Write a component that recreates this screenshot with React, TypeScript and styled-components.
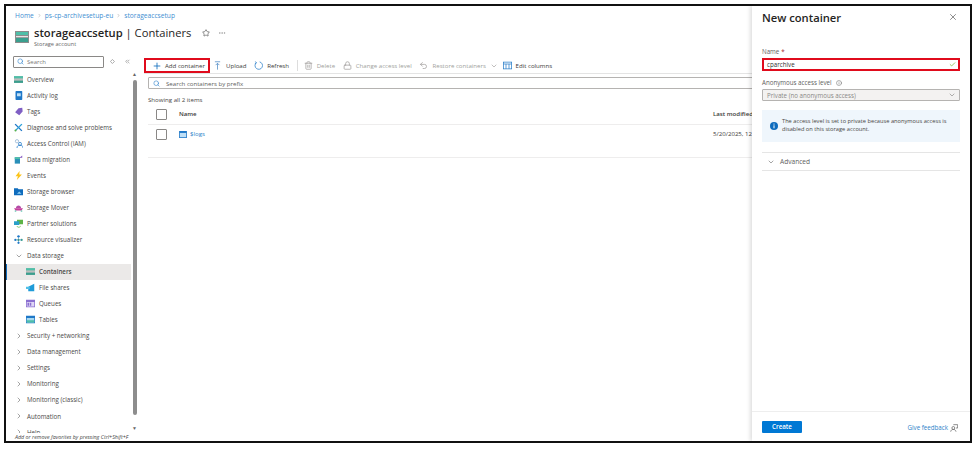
import React from 'react'
import styled, { createGlobalStyle } from 'styled-components'
import { ChevronDown, ChevronRight, Check, X, Plus, Lock, Undo2, Search as SearchGlyph, Star, Trash2, Info, ChevronsLeft, Ellipsis } from 'lucide-react'

const GlobalStyle = createGlobalStyle`
  html, body {
    margin: 0;
    padding: 0;
    background: #fff;
    font-family: "Open Sans", "Liberation Sans", sans-serif;
    color: #323130;
  }
`

const Frame = styled.div`
  position: relative;
  box-sizing: border-box;
  width: 968px;
  height: 439px;
  margin: 4px 0 0 4px;
  border: 2px solid #111;
  overflow: hidden;
  display: flex;
  flex-direction: column;
  background: #fff;
`

const Header = styled.header`
  height: 46px;
  padding: 4px 0 0 9px;
  box-sizing: border-box;
`

const Crumbs = styled.div`
  display: flex;
  align-items: center;
  gap: 3px;
  height: 10px;
  font-size: 6.65px;
  color: #3f8fd2;
`

const TitleRow = styled.div`
  display: flex;
  align-items: center;
  margin-top: 5px;
`

const TitleText = styled.div`
  margin-left: 5px;
`

const Title = styled.h1`
  margin: 0;
  font-size: 11.2px;
  line-height: 15px;
  font-weight: 400;
  color: #252423;
  display: flex;
  align-items: center;
  white-space: nowrap;
  b { font-weight: 600; }
`

const TitleTools = styled.div`
  display: flex;
  align-items: center;
  gap: 8px;
  margin-left: 11px;
  color: #555;
`

const Subtitle = styled.div`
  font-size: 5.6px;
  line-height: 8px;
  color: #666;
`

const Body = styled.div`
  flex: 1;
  min-height: 0;
  display: flex;
`

const Sidebar = styled.aside`
  width: 125px;
  flex: none;
  display: flex;
  flex-direction: column;
`

const SideSearchRow = styled.div`
  display: flex;
  align-items: center;
  height: 13px;
  margin: 3px 0 0 7px;
  color: #777;
`

const SideSearch = styled.div`
  box-sizing: border-box;
  width: 94px;
  height: 12px;
  border: 1px solid #8a8886;
  border-radius: 1px;
  display: flex;
  align-items: center;
  gap: 3px;
  padding-left: 3px;
  font-size: 6px;
  color: #7a7876;
`

const Nav = styled.nav`
  flex: 1;
  min-height: 0;
  overflow: hidden;
  margin-top: 3px;
`

const NavRow = styled.div<{ $level?: number; $active?: boolean }>`
  height: 16.05px;
  display: flex;
  align-items: center;
  gap: 4px;
  box-sizing: border-box;
  padding-left: ${p => (p.$level === 1 ? 19 : 7)}px;
  font-size: 6.2px;
  white-space: nowrap;
  color: #4a4948;
  background: ${p => (p.$active ? '#ebe9e8' : 'transparent')};
  border-left: 1px solid ${p => (p.$active ? '#0f6cbd' : 'transparent')};
  font-weight: ${p => (p.$active ? 600 : 400)};
`

const IconSlot = styled.span`
  width: 9px;
  height: 9px;
  flex: none;
  display: flex;
  align-items: center;
  justify-content: center;
`

const Note = styled.div`
  height: 8px;
  padding-left: 9px;
  font-size: 5.35px;
  line-height: 8px;
  font-style: italic;
  white-space: nowrap;
  color: #444;
`

const ScrollTrack = styled.div`
  width: 7px;
  flex: none;
  display: flex;
  flex-direction: column;
  align-items: center;
  padding: 20px 0 10px;
  box-sizing: border-box;
  color: #666;
  font-size: 5px;
  line-height: 5px;
`

const ScrollThumb = styled.div`
  flex: 1;
  width: 4px;
  margin: 3px 0 11px;
  background: #8d8d8d;
  border-radius: 2px;
`

const Main = styled.main`
  flex: 1;
  min-width: 0;
  padding: 6px 0 0 7px;
`

const Toolbar = styled.div`
  display: flex;
  align-items: center;
  height: 15px;
  border-bottom: 1px solid #e4e4e4;
  margin-left: -1px;
`

const ToolButton = styled.div<{ $disabled?: boolean }>`
  display: flex;
  align-items: center;
  gap: 4px;
  height: 15px;
  box-sizing: border-box;
  padding: 0 4.7px 0 3px;
  font-size: 6.1px;
  white-space: nowrap;
  color: ${p => (p.$disabled ? '#a19f9d' : '#3b3a39')};
`

const AddButton = styled(ToolButton)`
  gap: 3px;
  width: 66px;
  padding: 0 0 0 6px;
  border: 2px solid #e00b1c;
`

const ToolDivider = styled.div`
  width: 1px;
  height: 11px;
  background: #ddd;
  margin: 0 3px;
`

const FilterBox = styled.div`
  box-sizing: border-box;
  height: 12px;
  margin: 3px 0 0 3px;
  border: 1px solid #b5b3b1;
  border-radius: 1px;
  display: flex;
  align-items: center;
  gap: 6px;
  padding-left: 4px;
  font-size: 6.1px;
  color: #605e5c;
`

const Count = styled.div`
  margin: 6px 0 0 3px;
  font-size: 6.1px;
  line-height: 9px;
  color: #484644;
`

const TableRow = styled.div<{ $height: number; $head?: boolean }>`
  display: grid;
  grid-template-columns: 31px 534px 1fr;
  align-items: ${p => (p.$head ? 'center' : 'start')};
  height: ${p => p.$height}px;
  padding-top: ${p => (p.$head ? 0 : 4)}px;
  margin-left: 3px;
  border-bottom: 1px solid #eeeded;
  box-sizing: border-box;
  font-size: 6.1px;
  line-height: 10px;
  white-space: nowrap;
  color: #3b3a39;
  font-weight: ${p => (p.$head ? 600 : 400)};
`

const Checkbox = styled.span`
  display: block;
  width: 11px;
  height: 11px;
  margin-left: 8px;
  box-sizing: border-box;
  border: 1px solid #8a8886;
  border-radius: 1px;
`

const FileLink = styled.span`
  display: flex;
  align-items: center;
  gap: 3px;
  color: #2b7fc9;
`

const Panel = styled.section`
  position: absolute;
  top: 0;
  right: 0;
  bottom: 0;
  width: 218px;
  background: #fff;
  box-shadow: -2px 0 4px rgba(0, 0, 0, 0.13);
  display: flex;
  flex-direction: column;
`

const PanelBody = styled.div`
  flex: 1;
  padding: 0 10px;
`

const PanelHead = styled.div`
  display: flex;
  align-items: center;
  justify-content: space-between;
  height: 22px;
  padding-right: 2px;
  color: #777;
`

const PanelTitle = styled.h2`
  margin: 0;
  font-size: 11.2px;
  font-weight: 600;
  color: #252423;
`

const FieldLabel = styled.label<{ $top: number }>`
  display: flex;
  align-items: center;
  gap: 4px;
  margin-top: ${p => p.$top}px;
  font-size: 6.2px;
  line-height: 9px;
  color: #605e5c;
  em { color: #a4262c; font-style: normal; margin-left: -2px; }
`

const NameInput = styled.div`
  box-sizing: border-box;
  height: 13px;
  margin-top: 2px;
  border: 2px solid #e00b1c;
  display: flex;
  align-items: center;
  justify-content: space-between;
  padding: 0 2px 0 3px;
  font-size: 6.2px;
  color: #323130;
`

const SelectBox = styled.div`
  box-sizing: border-box;
  height: 12px;
  margin-top: 2px;
  background: #f3f2f1;
  border: 1px solid #b5b3b1;
  border-radius: 1px;
  display: flex;
  align-items: center;
  justify-content: space-between;
  padding: 0 3px 0 4px;
  font-size: 6.2px;
  color: #8a8886;
`

const InfoBox = styled.div`
  box-sizing: border-box;
  height: 32px;
  margin-top: 9px;
  background: #eff6fc;
  display: flex;
  align-items: center;
  gap: 4px;
  padding: 0 10px 0 8px;
  font-size: 5.7px;
  line-height: 7.6px;
  color: #484644;
`

const Advanced = styled.div`
  box-sizing: border-box;
  height: 19px;
  margin-top: 10px;
  border-top: 1px solid #e5e5e5;
  border-bottom: 1px solid #e5e5e5;
  display: flex;
  align-items: center;
  gap: 5px;
  padding-left: 5px;
  font-size: 6.6px;
  color: #605e5c;
`

const PanelFoot = styled.div`
  height: 30px;
  border-top: 1px solid #eee;
  display: flex;
  align-items: center;
  justify-content: space-between;
  padding: 0 12px 0 10px;
  box-sizing: border-box;
`

const CreateButton = styled.button`
  width: 40px;
  height: 12px;
  padding: 0;
  border: none;
  border-radius: 1px;
  background: #0078d4;
  color: #fff;
  font: 600 6.2px "Open Sans", sans-serif;
`

const Feedback = styled.span`
  display: flex;
  align-items: center;
  gap: 2px;
  font-size: 6.2px;
  color: #2b7fc9;
  padding-top: 2px;
`

const StorageIcon = ({ size = 9 }: { size?: number }) => (
  <svg width={size} height={size} viewBox="0 0 14 14">
    <rect x="0" y="1" width="14" height="12" fill="#8c8c8c" />
    <rect x="1" y="2" width="12" height="3" fill="#4fbfa8" />
    <rect x="1" y="6" width="12" height="1.2" fill="#e6e6e6" />
    <rect x="1" y="8" width="12" height="4" fill="#3a9f8e" />
  </svg>
)

const UploadIcon = () => (
  <svg width="9" height="9" viewBox="0 0 12 12" fill="none" stroke="#5b93c9" strokeWidth="1.1">
    <path d="M2.5 1h7M6 3v8.5M3.5 5.5L6 3l2.5 2.5" />
  </svg>
)

const RefreshIcon = () => (
  <svg width="9" height="9" viewBox="0 0 12 12" fill="none" stroke="#2b7fc9" strokeWidth="1">
    <path d="M3.2 2.2A5 5 0 1 0 7.5 1.2" />
    <path d="M1.8 .6l1.4 1.9-2 1" />
  </svg>
)

type IconName = 'overview' | 'log' | 'tag' | 'tools' | 'iam' | 'migrate' | 'bolt' | 'browser' | 'mover' | 'partner' | 'graph' | 'containers' | 'shares' | 'queues' | 'tables'

const shapes: Record<IconName, React.ReactNode> = {
  overview: <><rect x="0" y="1.5" width="12" height="9" fill="#bdbdbd" /><rect x="0" y="1.5" width="12" height="3" fill="#4fbfa8" /><rect x="0" y="7.5" width="12" height="3" fill="#3a9f8e" /></>,
  log: <><rect x="2" y="0" width="9" height="12" rx="1" fill="#1f78c8" /><rect x="4" y="3" width="5" height="4" fill="#bfe0f7" /></>,
  tag: <path d="M6 1.5l5-.5.5 5-4.5 5L1.5 7z" fill="#7f5fc4" />,
  tools: <><path d="M1.5 1.5l9 9" stroke="#1f78c8" strokeWidth="1.8" /><path d="M10.5 1.5l-9 9" stroke="#2b9fd8" strokeWidth="1.8" /><circle cx="2" cy="10" r="1.3" fill="#5db346" /></>,
  iam: <><circle cx="4" cy="3" r="2.2" fill="none" stroke="#8fb0d0" strokeWidth="1" /><circle cx="8" cy="6.5" r="2" fill="none" stroke="#1f78c8" strokeWidth="1" /><path d="M4 12c0-3 1.5-3.5 4-3.5s4 .5 4 3.5" fill="none" stroke="#1f78c8" /></>,
  migrate: <><path d="M1 3h7v8.5H1z" fill="#2a8fb8" /><path d="M1 3h7v2.5H1z" fill="#4fbfa8" /><path d="M7 4l4-3.5v3z" fill="#8a5fc4" /></>,
  bolt: <path d="M7.5 0L2 7h3.2l-1.4 5L10.5 4.8H7z" fill="#fcc419" />,
  browser: <><path d="M0 1.5h5l1 1.5h6v8H0z" fill="#0f6cbd" /><path d="M4 9l3-3 3 3z" fill="#8fd0f5" /></>,
  mover: <><path d="M2.5 7c0-5 7-5 7 0z" fill="#b44ca8" /><path d="M0 7h12l-2 3H2z" fill="#c4409c" /><rect x="1" y="10" width="2" height="1.5" fill="#4fbfa8" /><rect x="9" y="10" width="2" height="1.5" fill="#4fbfa8" /></>,
  partner: <><rect x="4" y="1" width="8" height="6" fill="#5db346" /><rect x="0" y="3" width="7" height="5" fill="#2a9fc8" /><path d="M4 9.5c.5 2 3.5 2 5 0" fill="none" stroke="#5db346" /></>,
  graph: <><circle cx="6" cy="1.8" r="1.6" fill="#1f78c8" /><circle cx="1.8" cy="6.5" r="1.5" fill="#1f78c8" /><circle cx="10.2" cy="6.5" r="1.5" fill="#3a9f8e" /><circle cx="6" cy="10.4" r="1.5" fill="#1f78c8" /><circle cx="6" cy="6.5" r="1.4" fill="#5db346" /><path d="M6 2v8M2 6.5h8" stroke="#1f78c8" strokeWidth=".6" fill="none" /></>,
  containers: <><rect x="0" y="1.5" width="12" height="9" fill="#bdbdbd" /><rect x="0" y="1.5" width="12" height="3" fill="#4fbfa8" /><rect x="0" y="7.5" width="12" height="3" fill="#3a9f8e" /></>,
  shares: <><path d="M3 5l8-4v10H3z" fill="#1f9bd8" /><rect x="0" y="5" width="5" height="3" fill="#50c0e8" /></>,
  queues: <><rect x="0" y="1" width="12" height="10" fill="#8a6fd0" /><rect x="1" y="4" width="10" height="6" fill="#ded5f5" /><rect x="2" y="5" width="2" height="4" fill="#8a6fd0" /><rect x="5" y="5" width="2" height="4" fill="#8a6fd0" /></>,
  tables: <><rect x="0" y="1" width="12" height="10" fill="#1f78c8" /><rect x="1" y="4" width="10" height="6" fill="#a8d8f0" /><rect x="1" y="7" width="10" height="3" fill="#4fbfa8" /></>
}

const NavIcon = ({ name }: { name: IconName }) => (
  <IconSlot><svg width="9" height="9" viewBox="0 0 12 12">{shapes[name]}</svg></IconSlot>
)

const topItems: Array<[IconName, string]> = [
  ['overview', 'Overview'],
  ['log', 'Activity log'],
  ['tag', 'Tags'],
  ['tools', 'Diagnose and solve problems'],
  ['iam', 'Access Control (IAM)'],
  ['migrate', 'Data migration'],
  ['bolt', 'Events'],
  ['browser', 'Storage browser'],
  ['mover', 'Storage Mover'],
  ['partner', 'Partner solutions'],
  ['graph', 'Resource visualizer']
]

const storageItems: Array<[IconName, string]> = [
  ['containers', 'Containers'],
  ['shares', 'File shares'],
  ['queues', 'Queues'],
  ['tables', 'Tables']
]

const groups = ['Security + networking', 'Data management', 'Settings', 'Monitoring', 'Monitoring (classic)', 'Automation', 'Help']

const App = (): JSX.Element => {
  return (
    <>
      <GlobalStyle />
      <Frame>
        <Header>
          <Crumbs>
            <span>Home</span><ChevronRight size={5} color="#888" />
            <span>ps-cp-archivesetup-eu</span><ChevronRight size={5} color="#888" />
            <span>storageaccsetup</span>
          </Crumbs>
          <TitleRow>
            <StorageIcon size={14} />
            <TitleText>
              <Title>
                <b>storageaccsetup</b>&nbsp;| Containers
                <TitleTools><Star size={8} /><Ellipsis size={8} color="#999" /></TitleTools>
              </Title>
              <Subtitle>Storage account</Subtitle>
            </TitleText>
          </TitleRow>
        </Header>
        <Body>
          <Sidebar>
            <SideSearchRow>
              <SideSearch><SearchGlyph size={7} color="#2b7fc9" />Search</SideSearch>
              <svg width="5" height="5" viewBox="0 0 6 6" style={{ marginLeft: 6 }}><path d="M3 .5L5.5 3 3 5.5.5 3z" fill="none" stroke="#999" /></svg>
              <ChevronsLeft size={7} style={{ marginLeft: 9 }} />
            </SideSearchRow>
            <Nav>
              {topItems.map(([icon, label]) => (
                <NavRow key={label}><NavIcon name={icon} />{label}</NavRow>
              ))}
              <NavRow><IconSlot><ChevronDown size={8} color="#777" /></IconSlot>Data storage</NavRow>
              {storageItems.map(([icon, label]) => (
                <NavRow key={label} $level={1} $active={label === 'Containers'}><NavIcon name={icon} />{label}</NavRow>
              ))}
              {groups.map(label => (
                <NavRow key={label}><IconSlot><ChevronRight size={8} color="#777" /></IconSlot>{label}</NavRow>
              ))}
            </Nav>
            <Note>Add or remove favorites by pressing Ctrl+Shift+F</Note>
          </Sidebar>
          <ScrollTrack>
            <span>▲</span>
            <ScrollThumb />
            <span>▼</span>
          </ScrollTrack>
          <Main>
            <Toolbar>
              <AddButton><Plus size={10} color="#0f6cbd" />Add container</AddButton>
              <ToolButton><UploadIcon />Upload</ToolButton>
              <ToolButton><RefreshIcon />Refresh</ToolButton>
              <ToolDivider />
              <ToolButton $disabled><Trash2 size={9} />Delete</ToolButton>
              <ToolButton $disabled><Lock size={9} />Change access level</ToolButton>
              <ToolButton $disabled><Undo2 size={9} />Restore containers<ChevronDown size={8} style={{ marginRight: -3 }} /></ToolButton>
              <ToolButton>
                <svg width="9" height="9" viewBox="0 0 12 12"><rect x=".5" y="1.5" width="11" height="9" fill="none" stroke="#2b7fc9" /><path d="M.5 4h11M4 4v6.5M8 4v6.5" stroke="#2b7fc9" fill="none" /></svg>
                Edit columns
              </ToolButton>
            </Toolbar>
            <FilterBox><SearchGlyph size={7} color="#2b7fc9" />Search containers by prefix</FilterBox>
            <Count>Showing all 2 items</Count>
            <TableRow $height={21} $head>
              <Checkbox /><span>Name</span><span>Last modified</span>
            </TableRow>
            <TableRow $height={33}>
              <Checkbox />
              <FileLink>
                <svg width="8" height="7" viewBox="0 0 10 9"><rect width="10" height="9" fill="#1f78c8" /><rect x="1" y="2.5" width="8" height="5.5" fill="#bfe0f7" /></svg>
                $logs
              </FileLink>
              <span>5/20/2025, 12:30:45 PM</span>
            </TableRow>
          </Main>
        </Body>
        <Panel>
          <PanelBody>
            <PanelHead>
              <PanelTitle>New container</PanelTitle>
              <X size={10} />
            </PanelHead>
            <FieldLabel $top={19}>Name <em>*</em></FieldLabel>
            <NameInput>cparchive<Check size={7} color="#57a300" /></NameInput>
            <FieldLabel $top={7}>Anonymous access level <Info size={6} color="#666" /></FieldLabel>
            <SelectBox>Private (no anonymous access)<ChevronDown size={8} color="#8a8886" /></SelectBox>
            <InfoBox>
              <svg width="8" height="8" viewBox="0 0 8 8" style={{ flex: 'none' }}><circle cx="4" cy="4" r="4" fill="#0f6cbd" /><rect x="3.5" y="3.3" width="1" height="3" fill="#fff" /><rect x="3.5" y="1.6" width="1" height="1" fill="#fff" /></svg>
              <span>The access level is set to private because anonymous access is disabled on this storage account.</span>
            </InfoBox>
            <Advanced><ChevronDown size={8} color="#777" />Advanced</Advanced>
          </PanelBody>
          <PanelFoot>
            <CreateButton>Create</CreateButton>
            <Feedback>
              Give feedback
              <svg width="8" height="8" viewBox="0 0 12 12" fill="none" stroke="#555" strokeWidth="1"><circle cx="5" cy="6" r="2.2" /><path d="M1 11.5c.5-2.5 2-3.3 4-3.3s3.5.8 4 3.3M5 1h6.5v5H9" /></svg>
            </Feedback>
          </PanelFoot>
        </Panel>
      </Frame>
    </>
  )
}

export default App
